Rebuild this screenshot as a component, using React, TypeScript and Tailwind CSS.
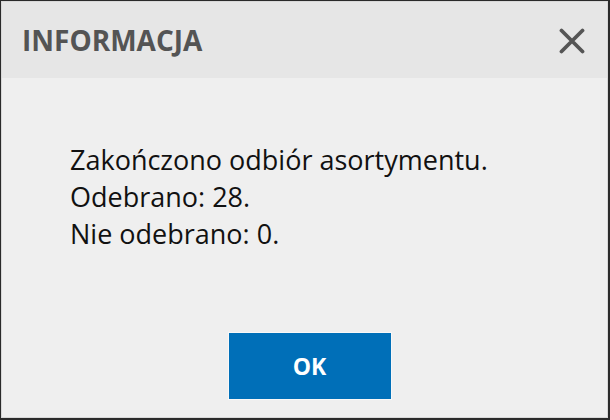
import React from "react";

export default function App() {
  return (
    <div className="w-[610px] h-[420px] bg-[#2a2a2a] pt-px pl-px pr-[2px] pb-[2px]" style={{ fontFamily: '"Open Sans", "Noto Sans", sans-serif' }}>
      <div className="w-full h-full border border-[#d8d8d8] bg-[#efefef] flex flex-col">
        <div className="h-[76px] bg-[#e6e6e6] flex items-center justify-between pl-[20px] pr-[22px]">
          <span className="text-[28px] font-bold text-[#545454]">INFORMACJA</span>
          <svg width="26" height="26" viewBox="0 0 26 26" className="mt-[1px]">
            <path d="M2.5 2.5 L23.5 23.5 M23.5 2.5 L2.5 23.5" stroke="#555" strokeWidth="3.8" strokeLinecap="round" />
          </svg>
        </div>
        <div className="flex-1 flex flex-col">
          <div className="pl-[68px] pt-[63px] text-[27px] leading-[37px] text-[#111]">
            <div>Zakończono odbiór asortymentu.</div>
            <div>Odebrano: 28.</div>
            <div>Nie odebrano: 0.</div>
          </div>
          <div className="flex-1" />
          <div className="flex justify-center pb-[17px] pl-[10px]">
            <button className="w-[164px] h-[68px] bg-[#006fb8] border border-[#f8f8f8] text-white font-bold text-[23px]">OK</button>
          </div>
        </div>
      </div>
    </div>
  );
}
